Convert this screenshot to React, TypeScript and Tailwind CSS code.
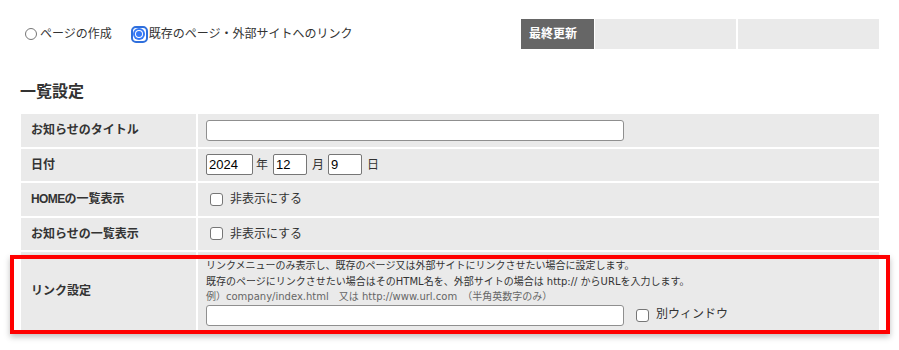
import React from "react";

const font = { fontFamily: '"Liberation Sans", "Noto Sans CJK JP", sans-serif' };
const noteFont = { fontFamily: '"DejaVu Sans", "Noto Sans CJK JP", sans-serif' };

const Checkbox = () => (
  <span className="inline-block w-[13px] h-[13px] rounded-[3px] border border-[#767676] bg-white" />
);

const Label: React.FC<{ children: React.ReactNode }> = ({ children }) => (
  <div className="bg-[#eaeaea] flex items-center pl-[10px] text-[12px] font-bold text-[#333]">{children}</div>
);

const Cell: React.FC<{ children: React.ReactNode }> = ({ children }) => (
  <div className="bg-[#eaeaea] flex items-center pl-[8px] text-[12px] text-[#333]">{children}</div>
);

export default function App() {
  return (
    <div className="relative w-[899px] h-[350px] bg-white overflow-hidden" style={font}>
      {/* top bar */}
      <div className="flex items-center justify-between pt-[19px] pl-[25px] pr-[20px]">
        <div className="flex items-center text-[12px] text-[#333]">
          <span className="inline-block w-[12px] h-[12px] rounded-full border border-[#767676] bg-white" />
          <span className="ml-[3px]">ページの作成</span>
          <span className="ml-[19px] flex items-center justify-center w-[17px] h-[17px] rounded-[5px] border-2 border-[#2f6fdc]">
            <span className="flex items-center justify-center w-[12px] h-[12px] rounded-full bg-[#3478f6]">
              <span className="flex items-center justify-center w-[8px] h-[8px] rounded-full bg-white">
                <span className="w-[6px] h-[6px] rounded-full bg-[#3478f6]" />
              </span>
            </span>
          </span>
          <span className="ml-[1px]">既存のページ・外部サイトへのリンク</span>
        </div>
        <div className="flex h-[30px]">
          <div className="w-[73px] bg-[#666] text-white text-[12px] font-bold flex items-center pl-[8px]">最終更新</div>
          <div className="w-[141px] ml-[1px] bg-[#eaeaea]" />
          <div className="w-[141px] ml-[2px] bg-[#eaeaea]" />
        </div>
      </div>

      <h2 className="ml-[20px] mt-[33px] text-[16px] font-bold text-[#333] leading-[20px]">一覧設定</h2>

      {/* table */}
      <div className="ml-[21px] mt-[12px] w-[858px] grid grid-cols-[175px_1fr] grid-rows-[32.5px_32.5px_32.5px_32.5px_78px] gap-[2px] bg-white">
        <Label>お知らせのタイトル</Label>
        <Cell>
          <div className="w-[418px] h-[21px] rounded-[3px] border border-[#8f8f8f] bg-white" />
        </Cell>

        <Label>日付</Label>
        <Cell>
          <input readOnly value="2024" className="w-[47px] h-[21px] rounded-[2px] border border-[#767676] bg-white px-[2px] text-[13px] text-black outline-none" />
          <span className="ml-[3px]">年</span>
          <input readOnly value="12" className="ml-[5px] w-[34px] h-[21px] rounded-[2px] border border-[#767676] bg-white px-[2px] text-[13px] text-black outline-none" />
          <span className="ml-[5px]">月</span>
          <input readOnly value="9" className="ml-[4px] w-[34px] h-[21px] rounded-[2px] border border-[#767676] bg-white px-[2px] text-[13px] text-black outline-none" />
          <span className="ml-[5px]">日</span>
        </Cell>

        <Label>
          <span className="tracking-[-0.6px]">HOME</span>の一覧表示
        </Label>
        <Cell>
          <span className="ml-[4px] flex items-center"><Checkbox /></span>
          <span className="ml-[7px]">非表示にする</span>
        </Cell>

        <Label>お知らせの一覧表示</Label>
        <Cell>
          <span className="ml-[4px] flex items-center"><Checkbox /></span>
          <span className="ml-[7px]">非表示にする</span>
        </Cell>

        <Label>リンク設定</Label>
        <div className="bg-[#eaeaea] pl-[8px] pt-[6px] text-[10px] leading-[15.5px] text-[#333]" style={noteFont}>
          <p>リンクメニューのみ表示し、既存のページ又は外部サイトにリンクさせたい場合に設定します。</p>
          <p>既存のページにリンクさせたい場合はそのHTML名を、外部サイトの場合は http:// からURLを入力します。</p>
          <p className="text-[#666]">例）company/index.html　又は http://www.url.com　（半角英数字のみ）</p>
          <div className="flex items-center text-[12px]" style={font}>
            <div className="w-[418px] h-[21px] rounded-[3px] border border-[#8f8f8f] bg-white" />
            <span className="ml-[12px] flex items-center"><Checkbox /></span>
            <span className="ml-[7px]">別ウィンドウ</span>
          </div>
        </div>
      </div>

      {/* highlight annotation */}
      <div className="absolute left-[10px] top-[255px] w-[880px] h-[79px] border-4 border-[#ff0000] shadow-[0_3px_6px_rgba(0,0,0,0.25)] pointer-events-none" />
    </div>
  );
}
